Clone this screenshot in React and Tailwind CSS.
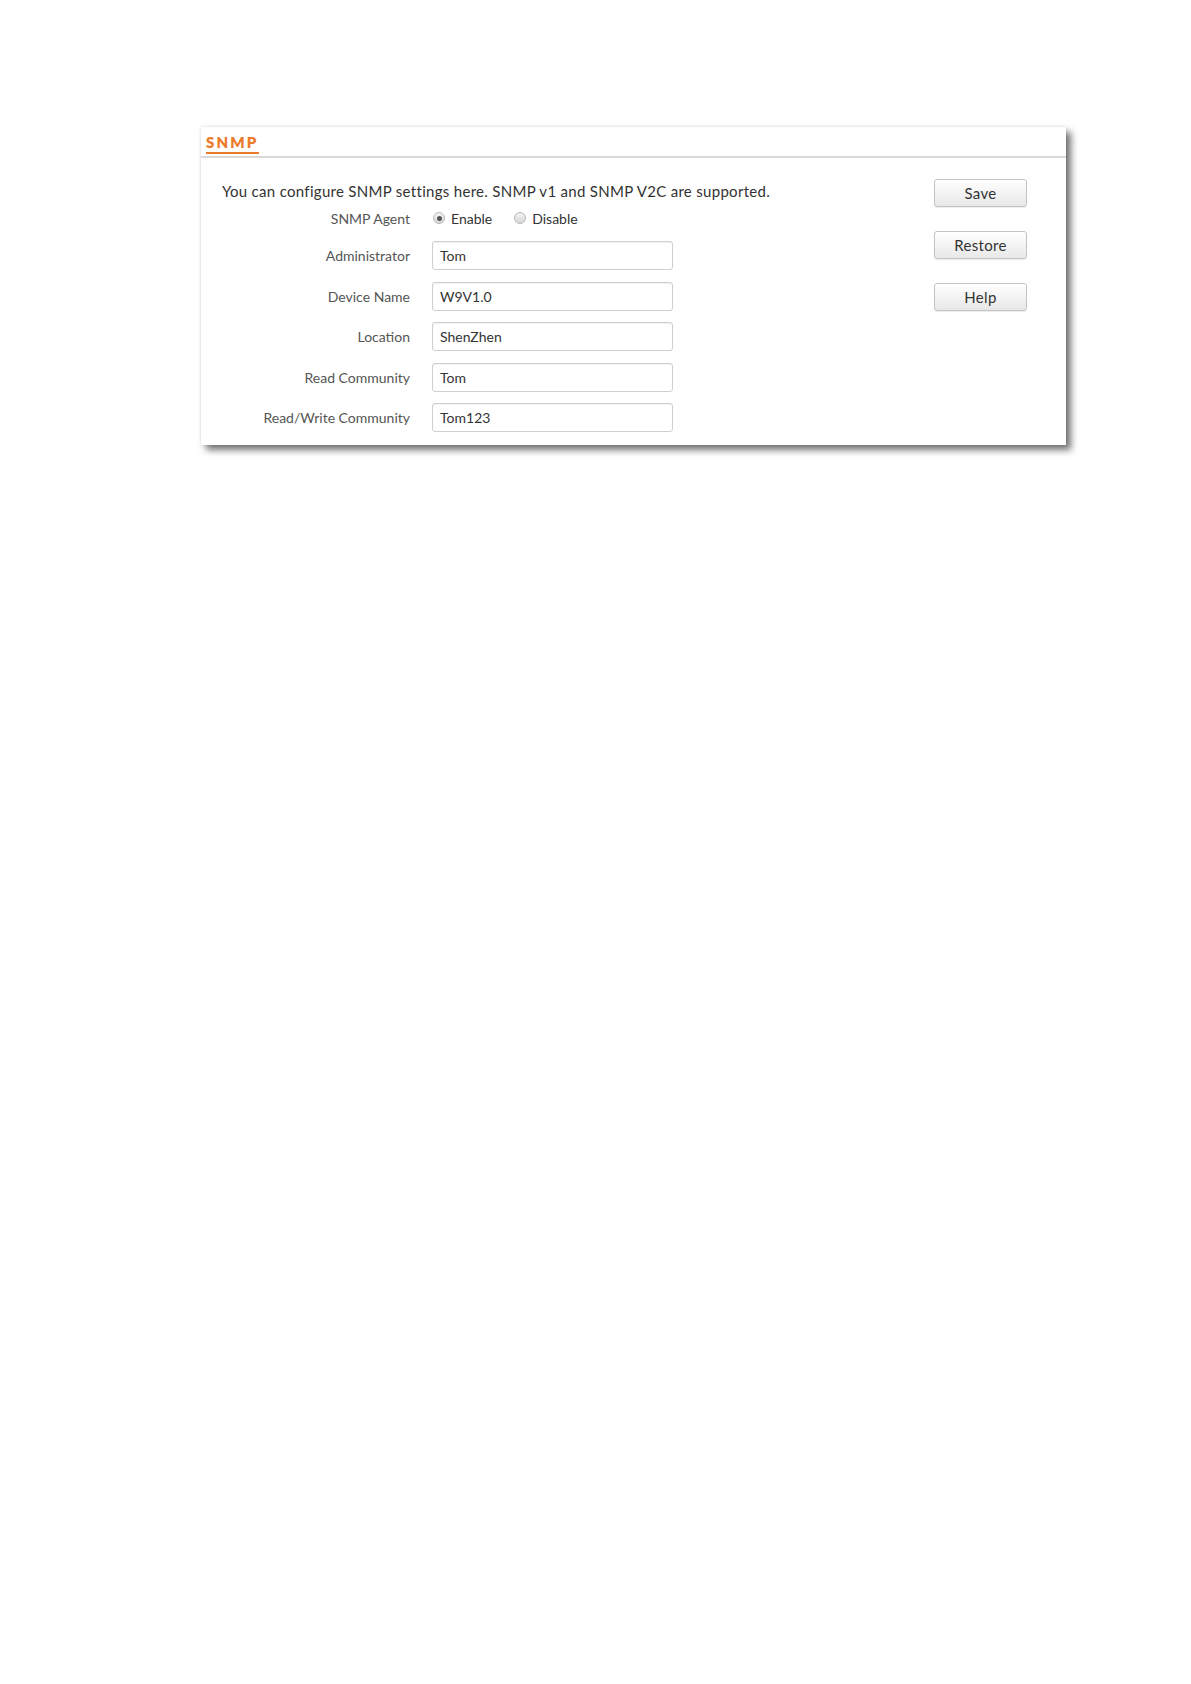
const FIELDS = [
  { label: 'Administrator', value: 'Tom' },
  { label: 'Device Name', value: 'W9V1.0' },
  { label: 'Location', value: 'ShenZhen' },
  { label: 'Read Community', value: 'Tom' },
  { label: 'Read/Write Community', value: 'Tom123' },
];

function Radio({ checked }) {
  return (
    <span className="flex h-[12px] w-[12px] items-center justify-center rounded-full border border-[#b8b8b8] bg-gradient-to-b from-[#f4f4f4] to-[#d6d6d6]">
      {checked && <span className="h-[5px] w-[5px] rounded-full bg-[#555]" />}
    </span>
  );
}

function Btn({ children }) {
  return (
    <button className="h-[28px] w-[93px] rounded-[3px] border border-[#c4c4c4] bg-gradient-to-b from-[#ffffff] to-[#e8e8e8] text-[15px] tracking-[0.02em] text-[#333] shadow-[0_1px_1px_rgba(0,0,0,0.08)]">
      {children}
    </button>
  );
}

export default function App() {
  return (
    <div className="min-h-[1684px] bg-white pt-[127px] pl-[201px] font-['Lato',sans-serif]">
      <div className="flex h-[318px] w-[865px] flex-col bg-white shadow-[5px_5px_7px_rgba(0,0,0,0.55),0_0_3px_rgba(0,0,0,0.12)]">
        {/* header */}
        <div className="flex h-[31px] shrink-0 items-end border-b-2 border-[#d9d9d9] pl-[5px]">
          <div className="mb-[2px] border-b-2 border-[#ec7a2c] pr-[1px] pb-[1px] text-[15px] font-extrabold leading-[18px] tracking-[0.14em] text-[#ec7a2c]">
            SNMP
          </div>
        </div>

        <div className="flex flex-1">
          {/* form */}
          <div className="flex flex-1 flex-col pt-[23px]">
            <p className="h-[20px] pl-[21px] text-[15px] leading-[20px] tracking-[0.02em] text-[#333]">
              You can configure SNMP settings here. SNMP v1 and SNMP V2C are supported.
            </p>
            <div className="mt-[7px] flex h-[20px] items-center">
              <span className="w-[209px] text-right text-[14px] text-[#555]">SNMP Agent</span>
              <div className="ml-[23px] flex items-center gap-[6px] text-[14px] text-[#333]">
                <Radio checked />
                <span>Enable</span>
              </div>
              <div className="ml-[22px] flex items-center gap-[6px] text-[14px] text-[#333]">
                <Radio />
                <span>Disable</span>
              </div>
            </div>
            <div className="mt-[13px] flex flex-col gap-[11.5px]">
              {FIELDS.map(f => (
                <div key={f.label} className="flex items-center">
                  <span className="w-[209px] text-right text-[14px] text-[#555]">{f.label}</span>
                  <div className="ml-[22px] flex h-[29px] w-[241px] items-center rounded-[3px] border border-[#cfcfcf] pl-[7px] text-[14px] text-[#333] shadow-[inset_0_1px_1px_rgba(0,0,0,0.06)]">
                    {f.value}
                  </div>
                </div>
              ))}
            </div>
          </div>

          {/* buttons */}
          <div className="mr-[39px] flex flex-col gap-[24px] pt-[21px]">
            <Btn>Save</Btn>
            <Btn>Restore</Btn>
            <Btn>Help</Btn>
          </div>
        </div>
      </div>
    </div>
  );
}
